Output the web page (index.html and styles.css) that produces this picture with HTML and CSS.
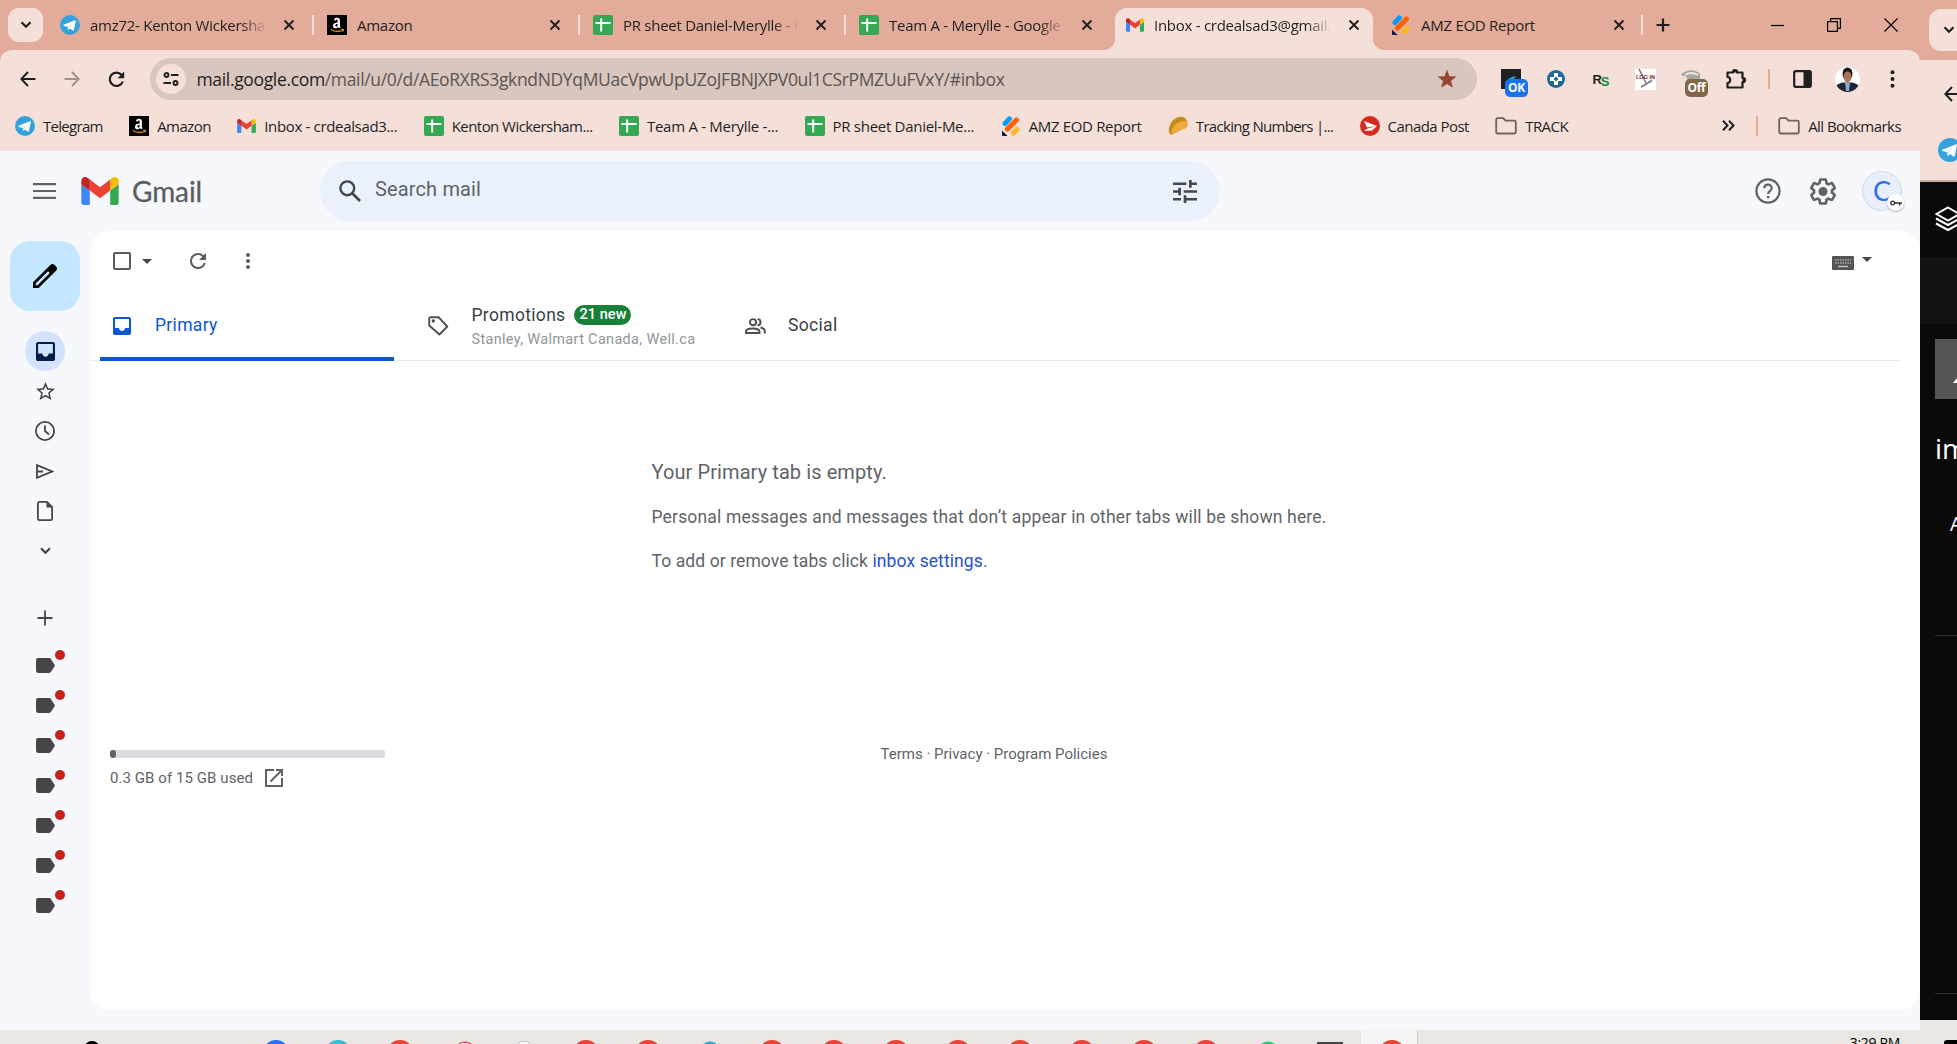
FILE: index.html
```html
<!DOCTYPE html>
<html lang="en">
<head>
<meta charset="utf-8">
<title>Inbox - Gmail</title>
<link rel="stylesheet" href="styles.css">
</head>
<body>
<svg class="defs" width="0" height="0">
  <symbol id="telegram" viewBox="0 0 20 20"><circle cx="10" cy="10" r="10" fill="#34a3dc"/><path d="M3.600 9.800 15 5.200c.6-.2 1 .1.800.9l-1.900 8.900c-.1.600-.6.800-1.100.5l-2.800-2.100-1.500 1.400c-.3.200-.6.100-.6-.3l-.1-2.400-3.900-1.200c-.6-.3-.6-.8-.3-1.100z" fill="#fff"/><path d="M7.600 12.200l4.500-3.800-3.400 4.500-.4 1.600z" fill="#b9dff2"/></symbol>
  <symbol id="amazon" viewBox="0 0 20 20"><rect width="20" height="20" fill="#000"/><path d="M7 5.200C7.300 3.300 8.500 2.800 10 2.800c2 0 2.900 1 2.900 2.800v4.800c0 .8.300 1.100.7 1.600l-1.400 1.200c-.7-.5-1-.9-1.200-1.300-.9 1-1.700 1.400-2.700 1.400-1.400 0-2.300-.9-2.300-2.400C6 8.300 8 7.700 10.700 7.500V5.800c0-.8-.3-1.200-.9-1.200-.6 0-.8.300-1 1zM10.700 8.900c-1.500 0-2.400.5-2.400 1.600 0 .7.300 1.100.9 1.100 1 0 1.500-.9 1.500-2.700z" fill="#fff"/><path d="M3.800 14.500q6 3.800 12.500.4M14.300 14.300l2.200.2-.7 2" fill="none" stroke="#d98a1e" stroke-width="1.300"/></symbol>
  <symbol id="sheets" viewBox="0 0 20 20"><rect width="20" height="20" rx="2" fill="#34a853"/><path d="M8.200 3.500v13M2.500 8h15" stroke="#fff" stroke-width="2"/></symbol>
  <symbol id="gmail" viewBox="52 42 88 66"><path fill="#4285f4" d="M58 108h14V74L52 59v43c0 3.320 2.690 6 6 6"/><path fill="#34a853" d="M120 108h14c3.320 0 6-2.690 6-6V59l-20 15"/><path fill="#fbbc04" d="M120 48v26l20-15v-8c0-7.420-8.470-11.650-14.400-7.200"/><path fill="#ea4335" d="M72 74V48l24 18 24-18v26L96 92"/><path fill="#c5221f" d="M52 51v8l20 15V48l-5.600-4.200c-5.940-4.450-14.400-.22-14.400 7.200"/></symbol>
  <symbol id="jotform" viewBox="0 0 20 20"><g stroke-linecap="round" stroke-width="5"><path d="M4 7.500 8.500 2.800" stroke="#0a9bff"/><path d="M6.500 13 15.500 4" stroke="#ff6100"/><path d="M12.500 17 16 13.500" stroke="#ffb629"/></g><path d="M1 14.500 6.500 20H2a1 1 0 0 1-1-1z" fill="#0a1551"/></symbol>
  <symbol id="x" viewBox="0 0 12 12"><path d="M1.500 1.500l9 9M10.500 1.500l-9 9" stroke="#1f1f1f" stroke-width="1.900"/></symbol>
  <symbol id="folder" viewBox="0 0 22 18"><path d="M1.200 15V2.700c0-.8.600-1.500 1.500-1.500h5.500l2.300 2.500h8.800c.8 0 1.500.6 1.500 1.500V15c0 .8-.7 1.500-1.500 1.500H2.700c-.9 0-1.500-.7-1.500-1.500z" fill="none" stroke="#6b615e" stroke-width="1.800"/></symbol>
  <symbol id="chev" viewBox="0 0 12 8"><path d="M1.500 1.200 6 5.800l4.500-4.600" fill="none" stroke="currentColor" stroke-width="2.200"/></symbol>
  <symbol id="back" viewBox="0 0 16 16"><path d="M15.500 8H1.500M8 1 1.300 8 8 15" fill="none" stroke="currentColor" stroke-width="2"/></symbol>
  <symbol id="inbox" viewBox="3 3 18 18"><path d="M19 3H5c-1.100 0-2 .9-2 2v14c0 1.100.9 2 2 2h14c1.100 0 2-.9 2-2V5c0-1.100-.9-2-2-2zm0 11h-4c0 1.660-1.350 3-3 3s-3-1.340-3-3H5V5h14v9z" fill="currentColor"/></symbol>
  <symbol id="label" viewBox="0 0 18 14"><path d="M2 0h10.500c.7 0 1.200.3 1.600.8L18 7l-3.900 6.200c-.4.500-.9.800-1.600.8H2a2 2 0 0 1-2-2V2a2 2 0 0 1 2-2z" fill="#444746"/></symbol>
</svg>

<div class="desktop">
  <main class="window">
    <div class="tabstrip">
      <button class="tabsearch"><svg width="12" height="8"><use href="#chev"/></svg></button>
      <div class="tab t1"><svg width="20" height="20"><use href="#telegram"/></svg><span class="title fade">amz72- Kenton Wickersham</span><svg width="12" height="12"><use href="#x"/></svg></div>
      <div class="tab"><svg width="20" height="20"><use href="#amazon"/></svg><span class="title">Amazon</span><svg width="12" height="12"><use href="#x"/></svg></div>
      <div class="tab"><svg width="20" height="20"><use href="#sheets"/></svg><span class="title fade">PR sheet Daniel-Merylle - Google</span><svg width="12" height="12"><use href="#x"/></svg></div>
      <div class="tab last"><svg width="20" height="20"><use href="#sheets"/></svg><span class="title fade">Team A - Merylle - Google Sheets</span><svg width="12" height="12"><use href="#x"/></svg></div>
      <div class="tab active"><svg width="18" height="14"><use href="#gmail"/></svg><span class="title fade">Inbox - crdealsad3@gmail.com</span><svg width="12" height="12"><use href="#x"/></svg></div>
      <div class="tab t6"><svg width="20" height="20"><use href="#jotform"/></svg><span class="title">AMZ EOD Report</span><svg width="12" height="12"><use href="#x"/></svg></div>
      <svg class="newtab" width="14" height="14" viewBox="0 0 14 14"><path d="M7 .5v13M.5 7h13" stroke="#1f1f1f" stroke-width="2.200"/></svg>
      <div class="winctl">
        <svg width="14" height="14" viewBox="0 0 14 14"><path d="M1 7.500h13" stroke="#000" stroke-width="1.200"/></svg>
        <svg width="14" height="14" viewBox="0 0 14 14"><path d="M.6 3.600h9.800v9.800H.6zM3.600 3.500V.6h9.800v9.800h-3" fill="none" stroke="#000" stroke-width="1.200"/></svg>
        <svg width="14" height="14" viewBox="0 0 14 14"><path d="M.5.5l13 13M13.500.5l-13 13" stroke="#000" stroke-width="1.200"/></svg>
      </div>
    </div>

    <div class="chrome">
      <div class="toolbar">
        <div class="nav">
          <svg width="16" height="16"><use href="#back"/></svg>
          <svg class="fwd" width="16" height="16"><use href="#back"/></svg>
          <svg width="17" height="17" viewBox="0 0 17 17"><path d="M14.800 10.500A6.700 6.700 0 1 1 13.500 3.800l1.500 1.800" fill="none" stroke="#1f1f1f" stroke-width="2.200"/><path d="M16.200.6v6.600H9.600z" fill="#1f1f1f"/></svg>
        </div>
        <div class="omnibox">
          <span class="site"><svg width="16" height="14" viewBox="0 0 16 14"><g fill="none" stroke="#1f1f1f" stroke-width="1.900"><circle cx="3.500" cy="3" r="2"/><path d="M8 3h7.500M.5 11H8"/><circle cx="12.500" cy="11" r="2"/></g></svg></span>
          <span class="url"><em>mail.google.com</em>/mail/u/0/d/AEoRXRS3gkndNDYqMUacVpwUpUZoJFBNJXPV0ul1CSrPMZUuFVxY/#inbox</span>
          <svg width="20" height="20" viewBox="0 0 20 20"><path d="M10 .5l2.500 6.700 7 .3-5.500 4.400 1.900 6.900L10 14.900l-5.900 3.900L6 11.900.5 7.500l7-.3z" fill="#94492f"/></svg>
        </div>
        <div class="exts">
          <div class="ext"><svg width="22" height="22" viewBox="0 0 22 22"><path d="M1 1h20v20H1z" fill="#202124"/><path d="M6 14Q9 9 16 8l-3 4z" fill="#2ba7e0"/></svg><i class="ok">OK</i></div>
          <div class="ext"><svg width="20" height="20" viewBox="0 0 20 20"><circle cx="10" cy="10" r="9" fill="#1f6a94"/><path d="M8 4h4v4h4v4h-4v4H8v-4H4V8h4z" fill="#fff"/><path d="M10 7.500 12.500 10 10 12.500 7.500 10z" fill="#1f6a94"/></svg></div>
          <div class="ext rs"><span>R</span><span class="s">S</span></div>
          <div class="ext"><span class="login"><svg width="21" height="21" viewBox="0 0 21 21"><path d="M4 0l7 14M17 11.500 6 18" stroke="#777" stroke-width="1.500"/></svg><i>LOG IN</i></span></div>
          <div class="ext"><svg width="22" height="22" viewBox="0 0 22 22"><path d="M1 7C5 1 16 1 20 6v10H7V9z" fill="#a9a4a0"/><path d="M5 7q6-4 13 0" stroke="#e8e4e0" stroke-width="2" fill="none"/></svg><i class="off">Off</i></div>
          <div class="ext"><svg width="22" height="22" viewBox="0 0 22 22"><path d="M2.500 4.500H8V3.600a2 1.600 0 0 1 4 0v.9h5.500V10h.9a1.600 2 0 0 1 0 4h-.9v5.500h-15V15c2 0 2.700-1.300 2.700-3s-.7-3-2.700-3z" fill="none" stroke="#1f1f1f" stroke-width="2.200" stroke-linejoin="round"/><path d="M8 2.500h4v2H8zM17.500 10h2v4h-2z" fill="#1f1f1f"/></svg></div>
        </div>
        <span class="vsep"></span>
        <svg class="panelicon" width="19" height="18" viewBox="0 0 19 18"><rect x="1.200" y="1.200" width="16.600" height="15.600" rx="1.500" fill="none" stroke="#1f1f1f" stroke-width="2.200"/><path d="M10.500 1h7v16h-7z" fill="#1f1f1f"/></svg>
        <svg class="me" width="25" height="25" viewBox="0 0 25 25"><clipPath id="c"><circle cx="12.500" cy="12.500" r="12.500"/></clipPath><g clip-path="url(#c)"><path d="M0 0h25v25H0z" fill="#fff"/><path d="M1 25V19q2-2.500 7-3.500h9q5 1 7 3.500v6z" fill="#1c2438"/><path d="M10 15h5l-1 9h-3z" fill="#8fa6c4"/><ellipse cx="12.500" cy="6.800" rx="5" ry="6.300" fill="#17161b"/><ellipse cx="12.500" cy="9.800" rx="3.900" ry="5.600" fill="#a8735a"/></g></svg>
        <svg class="kebab" width="5" height="18" viewBox="0 0 5 18"><g fill="#1f1f1f"><circle cx="2.500" cy="2.300" r="2"/><circle cx="2.500" cy="9" r="2"/><circle cx="2.500" cy="15.700" r="2"/></g></svg>
      </div>

      <div class="bookmarks">
        <a class="tight"><svg width="20" height="20"><use href="#telegram"/></svg><span>Telegram</span></a>
        <a class="snug"><svg width="20" height="20"><use href="#amazon"/></svg><span>Amazon</span></a>
        <a><svg width="19" height="14"><use href="#gmail"/></svg><span>Inbox - crdealsad3...</span></a>
        <a class="snug"><svg width="20" height="20"><use href="#sheets"/></svg><span>Kenton Wickersham...</span></a>
        <a class="loose"><svg width="20" height="20"><use href="#sheets"/></svg><span>Team A - Merylle -...</span></a>
        <a class="loose"><svg width="20" height="20"><use href="#sheets"/></svg><span>PR sheet Daniel-Me...</span></a>
        <a><svg width="20" height="20"><use href="#jotform"/></svg><span>AMZ EOD Report</span></a>
        <a class="tight"><svg width="20" height="20" viewBox="0 0 20 20"><path d="M1 12C3 4 8 0 15 1q6 3 4 10L3 19q-3-2-2-7z" fill="#d98a1c"/><path d="M2 14C4 7 9 3 17 3" fill="none" stroke="#7a9a2b" stroke-width="1.500" stroke-dasharray="2 1.500"/><path d="M4 18C3 11 9 5 18 5q2 4 0 7z" fill="#f2a93b"/></svg><span>Tracking Numbers |...</span></a>
        <a class="snug"><svg width="20" height="20" viewBox="0 0 20 20"><circle cx="10" cy="10" r="10" fill="#d52b1e"/><path d="M4 5l13 5-10 1.500zM17 10l-5 4.500-8 .5 3.500-2.500z" fill="#fff"/></svg><span>Canada Post</span></a>
        <a class="snug"><svg width="22" height="18"><use href="#folder"/></svg><span>TRACK</span></a>
        <svg class="more" width="13" height="11" viewBox="0 0 13 11"><path d="M1 .8 5.500 5.500 1 10.200M7 .8l4.500 4.700L7 10.200" fill="none" stroke="#1f1f1f" stroke-width="2"/></svg>
        <span class="vsep"></span>
        <a class="all snug"><svg width="22" height="18"><use href="#folder"/></svg><span>All Bookmarks</span></a>
      </div>
    </div>

    <div class="gmail">
      <header>
        <svg width="23" height="16" viewBox="0 0 23 16"><path d="M0 1.200h23M0 8h23M0 14.800h23" stroke="#5f6368" stroke-width="2.200"/></svg>
        <svg class="logo" width="38" height="28"><use href="#gmail"/></svg>
        <span class="brand">Gmail</span>
        <div class="search">
          <svg width="22" height="22" viewBox="0 0 22 22"><circle cx="8.300" cy="8.300" r="6.900" fill="none" stroke="#444746" stroke-width="2.400"/><path d="M13 13l8 8" stroke="#444746" stroke-width="2.600"/></svg>
          <span>Search mail</span>
          <svg width="24" height="23" viewBox="3 3 18 18" preserveAspectRatio="none"><path d="M3 17v2h6v-2H3zM3 5v2h10V5H3zm10 16v-2h8v-2h-8v-2h-2v6h2zM7 9v2H3v2h4v2h2V9H7zm14 4v-2H11v2h10zm-6-4h2V7h4V5h-4V3h-2v6z" fill="#444746"/></svg>
        </div>
        <div class="account">
          <svg width="26" height="26" viewBox="0 0 26 26"><circle cx="13" cy="13" r="11.600" fill="none" stroke="#5f6368" stroke-width="2.200"/><path d="M9.300 10.300c.1-4.900 7.400-4.700 7.400-.3 0 2.800-3.600 2.900-3.600 6" fill="none" stroke="#5f6368" stroke-width="2.200"/><path d="M12 18h2.300v2.300H12z" fill="#5f6368"/></svg>
          <svg width="26" height="27" viewBox="2 2 20 20"><path d="M13.850 22.250h-3.700c-.74 0-1.360-.54-1.450-1.270l-.27-1.890c-.27-.14-.53-.29-.79-.46l-1.800.72c-.7.260-1.470-.03-1.810-.65L2.200 15.530c-.35-.66-.2-1.440.36-1.880l1.530-1.190c-.01-.15-.02-.3-.02-.46 0-.15.010-.31.020-.46l-1.520-1.190c-.59-.45-.74-1.260-.37-1.880l1.850-3.190c.34-.62 1.110-.9 1.790-.63l1.810.73c.26-.17.520-.32.780-.46l.27-1.910c.09-.7.710-1.250 1.440-1.250h3.700c.74 0 1.360.54 1.450 1.270l.27 1.890c.27.140.53.290.79.460l1.800-.72c.71-.26 1.480.03 1.820.65l1.840 3.180c.36.660.2 1.440-.36 1.880l-1.520 1.190c.01.150.02.3.020.460s-.01.310-.02.460l1.520 1.190c.56.450.72 1.230.37 1.860l-1.860 3.220c-.34.620-1.110.9-1.800.63l-1.800-.72c-.26.170-.52.320-.78.460l-.27 1.910c-.1.680-.72 1.220-1.460 1.220zm-3.230-2h2.760l.37-2.550.53-.22c.44-.18.880-.44 1.340-.78l.45-.34 2.380.96 1.380-2.400-2.030-1.580.07-.56c.03-.26.060-.51.060-.78s-.03-.53-.06-.78l-.07-.56 2.030-1.580-1.390-2.400-2.390.96-.45-.35c-.42-.32-.87-.58-1.330-.77l-.52-.22-.37-2.550h-2.760l-.37 2.550-.53.21c-.44.190-.88.440-1.340.79l-.45.330-2.380-.95-1.390 2.390 2.030 1.580-.07.560a7 7 0 0 0-.06.790c0 .26.020.53.060.78l.07.560-2.030 1.580 1.380 2.400 2.390-.96.450.35c.43.330.86.580 1.330.770l.53.220z" fill="#5f6368"/><circle cx="12" cy="12" r="3.500" fill="#5f6368"/></svg>
          <div class="avatar">C<span class="key"><svg width="12" height="6" viewBox="0 0 12 6"><circle cx="2.700" cy="3" r="1.900" fill="none" stroke="#333" stroke-width="1.400"/><path d="M4.500 3H12M9.700 3v2.500" stroke="#333" stroke-width="1.500"/></svg></span></div>
        </div>
      </header>

      <nav class="rail">
        <button class="compose"><svg width="24" height="24" viewBox="3 3 18 18"><path d="M3 21v-4.250L16.200 3.580q.3-.28.670-.43T17.630 3q.4 0 .77.150t.65.450l1.370 1.400q.3.270.44.650t.14.750q0 .4-.14.760t-.44.670L7.250 21H3zM5 19h1.400l9.250-9.220-.7-.73-.72-.7L5 17.600V19z" fill="#000"/></svg></button>
        <div class="rbtn sel"><svg width="19" height="19"><use href="#inbox"/></svg></div>
        <div class="rbtn"><svg width="19" height="18" viewBox="2 2 20 19"><path d="M22 9.240l-7.190-.62L12 2 9.190 8.630 2 9.240l5.460 4.730L5.820 21 12 17.270 18.180 21l-1.630-7.030L22 9.240zM12 15.400l-3.760 2.270 1-4.280-3.320-2.880 4.380-.38L12 6.100l1.710 4.040 4.380.38-3.320 2.880 1 4.280L12 15.400z" fill="#444746"/></svg></div>
        <div class="rbtn"><svg width="20" height="20" viewBox="0 0 20 20"><circle cx="10" cy="10" r="9.100" fill="none" stroke="#444746" stroke-width="1.800"/><path d="M10 4.500V10l4 3.500" fill="none" stroke="#444746" stroke-width="1.800"/></svg></div>
        <div class="rbtn"><svg width="18" height="15" viewBox="0 0 18 15"><path d="M1 1.200 16 7.500 1 13.800zM1 7.500h6" fill="none" stroke="#444746" stroke-width="1.800"/></svg></div>
        <div class="rbtn"><svg width="16" height="20" viewBox="0 0 16 20"><path d="M10 .9H2.500C1.500.9.900 1.500.9 2.500v15c0 1 .6 1.600 1.600 1.600h11c1 0 1.600-.6 1.600-1.600V6z" fill="none" stroke="#444746" stroke-width="1.800"/><path d="M9.500 1v5.500H15z" fill="#444746"/></svg></div>
        <div class="rbtn"><svg width="13" height="8"><use href="#chev"/></svg></div>
        <div class="rbtn plus"><svg width="16" height="16" viewBox="0 0 16 16"><path d="M8 .5v15M.5 8h15" stroke="#444746" stroke-width="1.800"/></svg></div>
        <div class="lbl"><svg width="19" height="15"><use href="#label"/></svg><i></i></div>
        <div class="lbl"><svg width="19" height="15"><use href="#label"/></svg><i></i></div>
        <div class="lbl"><svg width="19" height="15"><use href="#label"/></svg><i></i></div>
        <div class="lbl"><svg width="19" height="15"><use href="#label"/></svg><i></i></div>
        <div class="lbl"><svg width="19" height="15"><use href="#label"/></svg><i></i></div>
        <div class="lbl"><svg width="19" height="15"><use href="#label"/></svg><i></i></div>
        <div class="lbl"><svg width="19" height="15"><use href="#label"/></svg><i></i></div>
      </nav>

      <section class="panel">
        <div class="actions">
          <span class="check"></span><span class="caret"></span>
          <svg class="refresh" width="16" height="16" viewBox="4 4 16 16"><path d="M17.650 6.350A7.950 7.950 0 0 0 12 4a8 8 0 1 0 7.730 10h-2.080A6 6 0 1 1 12 6c1.660 0 3.140.69 4.220 1.780L13 11h7V4l-2.350 2.350z" fill="#5a5c5e"/></svg>
          <svg class="dots" width="4" height="16" viewBox="0 0 4 16"><g fill="#5a5c5e"><circle cx="2" cy="2" r="2"/><circle cx="2" cy="8" r="2"/><circle cx="2" cy="14" r="2"/></g></svg>
          <svg class="kbd" width="22" height="14" viewBox="0 0 22 14"><rect width="22" height="14" rx="1" fill="#555"/><path d="M3 4h16M3 7h16" stroke="#aaa" stroke-width="1.500" stroke-dasharray="1.500 1"/><path d="M6 10.500h10" stroke="#ccc" stroke-width="1.300"/></svg>
          <span class="caret k"></span>
        </div>
        <div class="tabs">
          <div class="cat on"><svg width="18" height="18"><use href="#inbox"/></svg><b>Primary</b></div>
          <div class="cat"><svg width="21" height="20" viewBox="0 0 21 20"><path d="M1.200 2.700c0-.9.600-1.500 1.500-1.500h7.800L19.300 10.500l-7.800 8L1.200 9.500z" fill="none" stroke="#4d5051" stroke-width="1.900" stroke-linejoin="round"/><circle cx="5.300" cy="5" r="1.700" fill="#4d5051"/></svg>
            <div><p><b>Promotions</b><span class="badge">21 new</span></p><small>Stanley, Walmart Canada, Well.ca</small></div></div>
          <div class="cat soc"><svg width="21" height="16" viewBox="0 0 21 16"><g fill="none" stroke="#4d5051" stroke-width="1.900"><circle cx="8" cy="4.200" r="3.100"/><path d="M1 15v-1.500c0-4 13.500-4 13.500 0V15zM12.500 1.100a3.100 3.100 0 0 1 0 6.200M15.500 9.500c3 .6 4.300 2 4.300 3.500v2.500"/></g></svg><b>Social</b></div>
        </div>
        <div class="empty">
          <h2>Your Primary tab is empty.</h2>
          <p class="wide">Personal messages and messages that don’t appear in other tabs will be shown here.</p>
          <p>To add or remove tabs click <a>inbox settings</a>.</p>
        </div>
        <footer>
          <div class="quota"><div class="bar"><span></span></div><p><span>0.3 GB of 15 GB used</span><svg width="18" height="18" viewBox="3 3 18 18"><path d="M19 19H5V5h7V3H3v18h18v-9h-2v7zM14 3v2h3.590l-9.830 9.830 1.410 1.410L19 6.410V10h2V3h-7z" fill="#5f6368"/></svg></p></div>
          <div class="terms">Terms · Privacy · Program Policies</div>
        </footer>
      </section>
    </div>
  </main>

  <aside class="window2">
    <div class="w2tabs"><button><svg width="12" height="8"><use href="#chev"/></svg></button></div>
    <div class="w2bar"><svg width="16" height="18"><use href="#back"/></svg><svg width="24" height="24"><use href="#telegram"/></svg></div>
    <div class="w2head"><svg width="26" height="26" viewBox="0 0 26 26"><g fill="none" stroke="#fff" stroke-width="2"><path d="M13 1.500 24.500 8 13 14.500 1.500 8z"/><path d="M1 12.500l12 6.500 12-6.500M1 17.500l12 6.500 12-6.500"/></g></svg></div>
    <div class="w2strip"></div>
    <div class="w2body"><div class="thumb"><svg width="6" height="8" viewBox="0 0 6 8"><path d="M0 8 5 2l1 0v6z" fill="#fff"/></svg></div><h3>im</h3><p>A</p><hr><hr class="low"></div>
  </aside>

  <div class="taskbar">
    <i class="ic black"></i><i class="ic blue"></i><i class="ic teal"></i><i class="ic red"></i><i class="ic ring"></i><i class="ic white"></i><i class="ic red"></i><i class="ic red"></i><i class="ic tg"></i><i class="ic red"></i><i class="ic red"></i><i class="ic red"></i><i class="ic red"></i><i class="ic red"></i><i class="ic red"></i><i class="ic red"></i><i class="ic red"></i><i class="ic green"></i><i class="ic dark"></i><i class="ic red cur"></i>
    <span class="clock">3:29 PM</span>
  </div>
  <div class="taskbar2"><i></i></div>
</div>
</body>
</html>
```
FILE: styles.css
```css
* { box-sizing: border-box; }
body { margin: 0; width: 1957px; height: 1044px; overflow: hidden; font-family: "Open Sans", "Noto Sans", sans-serif; color: #1f1f1f; }
.defs { position: absolute; }
svg { display: block; flex: none; }
b, i, em { font-weight: inherit; font-style: normal; }
p, h2, h3 { margin: 0; font-weight: 400; }
button { border: 0; padding: 0; display: flex; align-items: center; justify-content: center; color: #1f1f1f; flex: none; }

.desktop { display: grid; grid-template-columns: 1920px 37px; height: 1044px; background: #e9e6e3; overflow: hidden; align-items: start; grid-template-rows: 1020px 10px 14px; }
.window { grid-column: 1; grid-row: 1 / 3; height: 1030px; background: #e3ac9a; display: flex; flex-direction: column; }

/* Tab strip */
.tabstrip { height: 50px; display: flex; align-items: center; padding-left: 8px; font-size: 15px; letter-spacing: -.27px; flex: none; }
.tabsearch { width: 35px; height: 34px; border-radius: 11px; background: #f5e0d9; }
.tab { width: 266px; height: 50px; display: flex; align-items: center; padding: 0 18px 0 14px; position: relative; }
.tab.t1 { width: 270px; padding-left: 17px; }
.tab::after { content: ""; position: absolute; right: -1px; top: 15px; width: 2px; height: 20px; background: #f5e0d9; }
.tab.last { width: 270px; padding-right: 22px; }
.tab.last::after { display: none; }
.title { flex: 1; margin: 0 12px 0 10px; white-space: nowrap; overflow: hidden; line-height: 22px; }
.fade { -webkit-mask-image: linear-gradient(90deg, #000 calc(100% - 30px), transparent 98%); }
.tab.active { width: 258px; height: 42px; align-self: flex-end; background: #f5e0d9; border-radius: 12px 12px 0 0; padding: 0 13px 8px 11px; }
.tab.active::before, .tab.active::after { content: ""; position: absolute; right: auto; top: auto; bottom: 0; left: -12px; width: 12px; height: 12px; background: radial-gradient(circle at 0 0, #e3ac9a 12px, #f5e0d9 12.500px); }
.tab.active::after { left: auto; right: -12px; background: radial-gradient(circle at 100% 0, #e3ac9a 12px, #f5e0d9 12.500px); }
.tab.t6 { width: 269px; padding: 0 17px 0 18px; }
.newtab { margin-left: 14px; }
.winctl { margin-left: auto; display: flex; gap: 43px; padding-right: 22px; }

/* Toolbar */
.chrome { background: #f5e0d9; height: 101px; border-radius: 12px 12px 0 0; flex: none; }
.toolbar { height: 50px; padding-top: 8px; display: flex; align-items: center; }
.nav { width: 150px; display: flex; align-items: center; gap: 28px; padding-left: 20px; }
.fwd { transform: scaleX(-1); color: #a2928d; }
.omnibox { width: 1327px; height: 42px; border-radius: 21px; background: #d8c6bf; display: flex; align-items: center; padding: 0 20px 0 6px; }
.site { width: 30px; height: 30px; border-radius: 50%; background: #f5e0d9; display: flex; align-items: center; justify-content: center; }
.url { margin-left: 10.500px; font-size: 17.500px; letter-spacing: -.34px; color: #5c5451; flex: 1; white-space: nowrap; line-height: 24px; }
.url em { color: #1f1f1f; }
.exts { display: flex; margin-left: 11px; }
.ext { width: 45px; height: 42px; display: flex; align-items: center; justify-content: center; position: relative; }
.ext .ok, .ext .off { position: absolute; left: 17px; top: 21px; width: 23px; height: 18px; border-radius: 5px; background: #1a73e8; color: #fff; font-weight: 700; font-size: 12px; letter-spacing: -.3px; line-height: 18px; text-align: center; }
.ext .off { background: #80674a; }
.rs { font: 700 13px "Liberation Sans", sans-serif; letter-spacing: -1px; }
.rs .s { color: #0e8a3a; margin-top: 4px; }
.login { width: 21px; height: 21px; background: #fff; position: relative; }
.login i { position: absolute; left: 1px; top: 4px; font: 700 5.500px/8px "Liberation Sans", sans-serif; color: #7a1c1c; white-space: nowrap; }
.vsep { width: 2px; height: 20px; background: #e3ac9a; flex: none; }
.exts + .vsep { margin-left: 10px; }
.panelicon { margin-left: 23px; }
.me { margin-left: 23px; }
.kebab { margin-left: 30px; }

/* Bookmarks */
.bookmarks { height: 51px; display: flex; align-items: center; gap: 26.400px; padding: 0 19px 0 15px; font-size: 15px; letter-spacing: -.34px; white-space: nowrap; }
.bookmarks a { display: flex; align-items: center; gap: 8px; line-height: 22px; }
.bookmarks .tight { letter-spacing: -.7px; }
.bookmarks .snug { letter-spacing: -.55px; }
.bookmarks .loose { letter-spacing: -.28px; }
.bookmarks .more { margin-left: auto; margin-right: -6px; }
.bookmarks .all { margin-left: -6px; }

/* Gmail */
.gmail { flex: 1; background: #f6f8fc; display: grid; grid-template: 80px 1fr 20px / 90px 1fr; font-family: Roboto, "Open Sans", sans-serif; }
header { grid-column: 1 / 3; display: flex; align-items: center; padding-left: 33px; }
.logo { margin-left: 25px; }
.brand { margin-left: 13px; width: 188px; font-family: Lato, sans-serif; font-size: 28px; line-height: 36px; letter-spacing: -.1px; color: #5a5d61; -webkit-text-stroke: .3px #5a5d61; }
.search { width: 900px; height: 60px; border-radius: 30px; background: #eaf1fb; display: flex; align-items: center; padding: 0 23px 0 19px; font-size: 20px; letter-spacing: .14px; color: #5f6368; }
.search span { margin-left: 14px; flex: 1; padding-bottom: 5px; }
.account { margin-left: auto; display: flex; align-items: center; gap: 29px; padding-right: 18px; }
.avatar { width: 40px; height: 40px; margin-left: -3px; border-radius: 50%; background: #e8eefb; border: 1px solid #cfd9ea; color: #2a6fe8; font-family: Lato, sans-serif; font-size: 27px; line-height: 37px; text-align: center; position: relative; }
.key { position: absolute; left: 24px; top: 22px; width: 17px; height: 17px; border-radius: 50%; background: #fff; box-shadow: 0 1px 2px rgba(0,0,0,.3); display: flex; align-items: center; justify-content: center; }

.rail { grid-row: 2 / 4; display: flex; flex-direction: column; align-items: center; padding-top: 10px; }
.compose { width: 70px; height: 70px; border-radius: 20px; background: #c2e7ff; margin-bottom: 20px; }
.rbtn { width: 40px; height: 40px; display: flex; align-items: center; justify-content: center; color: #444746; flex: none; }
.sel { background: #d3e3fd; border-radius: 50%; color: #041e49; }
.plus { margin: 27px 0 7px; }
.lbl { width: 40px; height: 40px; position: relative; display: flex; align-items: center; justify-content: center; flex: none; }
.lbl i { position: absolute; left: 30px; top: 5px; width: 10px; height: 10px; border-radius: 50%; background: #c5221f; }

.panel { background: #fff; border-radius: 20px; display: flex; flex-direction: column; color: #5f6368; }
.actions { height: 60px; display: flex; align-items: center; padding: 0 48px 0 23px; }
.check { width: 18px; height: 18px; border: 2px solid #5a5c5e; border-radius: 2px; }
.caret { border: 5px solid transparent; border-top-color: #444746; border-bottom: 0; margin-left: 11px; }
.refresh { margin-left: 38px; }
.dots { margin-left: 40px; }
.kbd { margin-left: auto; margin-top: 4px; }
.caret.k { margin: 0 0 3px 8px; }
.tabs { height: 70px; margin-right: 20px; padding-left: 10px; display: flex; border-bottom: 1px solid #e9eaec; font-size: 17.500px; letter-spacing: .32px; color: #3c4043; }
.cat { width: 317px; height: 70px; display: flex; align-items: center; padding-left: 21px; white-space: nowrap; }
.cat.on { width: 294px; padding: 4px 0 0 13px; color: #0b57d0; border-bottom: 4px solid #0b57d0; border-radius: 3px 3px 0 0; margin-right: 13px; }
.cat > b { margin: -3px 0 0 24px; }
.cat.soc > b { margin-left: 22px; }
.cat > div { margin-left: 22.500px; }
.cat p { display: flex; align-items: center; height: 22px; }
.cat small { display: block; font-size: 14.500px; line-height: 18px; margin-top: 5px; color: #929699; }
.badge { margin-left: 9px; background: #188038; color: #fff; height: 20px; width: 57px; border-radius: 10px; font-size: 14.500px; font-weight: 500; line-height: 20px; letter-spacing: .05px; text-align: center; }
.empty { padding: 97px 0 0 561.500px; font-size: 17.500px; line-height: 26px; letter-spacing: .09px; white-space: nowrap; }
.empty > * { width: max-content; }
.empty h2 { font-size: 20px; line-height: 28px; margin-bottom: 18px; }
.empty p { margin-bottom: 18px; }
.empty .wide { letter-spacing: .171px; }
.empty a { color: #1f52cc; }
footer { padding: 153px 0 0 20px; display: flex; font-size: 15px; }
.quota { width: 275px; letter-spacing: .07px; }
.bar { height: 8px; margin-top: 5px; background: #dadce0; border-radius: 2px; }
.bar span { display: block; width: 6px; height: 8px; border-radius: 3px; background: #5f6368; }
.quota p { display: flex; align-items: center; gap: 12px; margin-top: 11px; }
.terms { margin-left: 495.500px; line-height: 18px; }

/* Neighbouring window */
.window2 { grid-column: 2; grid-row: 1; height: 1020px; background: #0a0a0a; overflow: hidden; display: flex; flex-direction: column; }
.w2tabs { height: 60px; background: #e3ac9a; padding: 9px 0 0 9px; flex: none; }
.w2tabs button { width: 40px; height: 42px; border-radius: 12px; background: #f5e0d9; }
.w2bar { height: 122px; background: #f5e0d9; border-bottom: 2px solid #c9b1a9; padding: 25px 0 0 24px; flex: none; display: flex; flex-direction: column; gap: 35px; }
.w2bar svg + svg { margin-left: -6px; }
.w2head { height: 75px; padding: 24px 0 0 15px; flex: none; }
.w2strip { height: 67px; background: #121212; flex: none; }
.w2body { padding: 15px 0 0 15px; color: #fff; }
.thumb { width: 60px; height: 60px; background: #555; padding: 36px 0 0 18px; }
.w2body h3 { font-size: 28px; line-height: 40px; margin-top: 29px; }
.w2body p { font-size: 20px; line-height: 28px; margin: 42px 0 0 15px; }
.w2body hr { border: 0; height: 1px; background: #2a2a2a; margin: 97px 0 0; width: 60px; }
.w2body hr.low { margin-top: 357px; }

/* Taskbar */
.taskbar { grid-column: 1; grid-row: 3; height: 14px; overflow: hidden; display: flex; background: #eae6e4; }
.ic { width: 62px; height: 14px; flex: none; background: radial-gradient(circle at 31px 23px, var(--c) 12.500px, transparent 13.500px); }
.red { --c: #ea4335; }
.black { margin: 0 122px 0 61px; background: radial-gradient(circle at 31px 19px, #000 7.500px, transparent 8.500px); }
.blue { --c: #2470ff; }
.teal { --c: #2fc0d3; }
.ring { background: radial-gradient(circle at 34px 22px, #f8f5f3 9px, #e8505a 9.500px, #e8505a 10px, transparent 11px); }
.white { background: radial-gradient(circle at 31px 22px, #fff 10px, #bbb 10.500px, transparent 11.500px); }
.tg { background: radial-gradient(circle at 31px 21px, #2ea3dc 9px, transparent 10px); }
.green { background: radial-gradient(circle at 31px 22px, #25d366 10px, transparent 11px); }
.dark { background: linear-gradient(#444, #444) 18px 12px / 26px 2px no-repeat; }
.cur { width: 57px; background-color: #f7f5f4; border-right: 1px solid #ccc; }
.clock { margin: 5px 20px 0 auto; font-size: 14px; line-height: 16px; letter-spacing: -.3px; color: #000; }
.taskbar2 { grid-column: 2; grid-row: 2 / 4; height: 24px; background: #eae6e4; padding: 20px 0 0 24px; }
.taskbar2 i { display: block; width: 13px; height: 4px; background: #000; border-radius: 3px 0 0 0; }
```
